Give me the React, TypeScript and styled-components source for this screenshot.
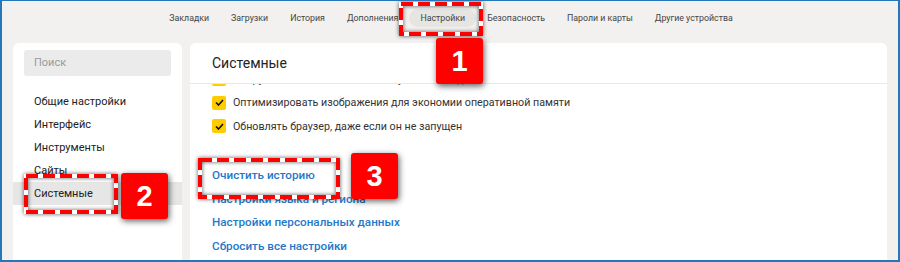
import React from "react";
import styled, { createGlobalStyle } from "styled-components";

const Global = createGlobalStyle`
  html, body { margin: 0; padding: 0; }
  body { font-family: Roboto, "Open Sans", sans-serif; }
  * { box-sizing: border-box; }
`;

const Page = styled.div`
  position: relative;
  width: 900px;
  height: 262px;
  overflow: hidden;
  background: #f2f1ef;
  border-top: 1px solid #2478ba;
  border-left: 2px solid #2478ba;
  border-right: 2px solid #2478ba;
  border-bottom: 2px solid #2478ba;
  display: flex;
  flex-direction: column;
`;

const Nav = styled.nav`
  height: 33px;
  display: flex;
  justify-content: center;
  align-items: center;
  padding-left: 2px;
`;

const NavItem = styled.div<{ $active?: boolean }>`
  font-size: 8.8px;
  color: #444;
  padding: 4px 11px;
  border-radius: 12px;
  white-space: nowrap;
  background: ${(p) => (p.$active ? "#e6e5e2" : "transparent")};
`;

const Body = styled.div`
  flex: 1;
  display: flex;
  gap: 8px;
  padding: 9px 11px 0 11px;
  min-height: 0;
`;

const Sidebar = styled.aside`
  width: 169px;
  background: #fff;
  border-radius: 6px 6px 0 0;
  padding-top: 7px;
  display: flex;
  flex-direction: column;
`;

const Search = styled.div`
  margin: 0 11px 0 11px;
  height: 26px;
  background: #ebebeb;
  border-radius: 3px;
  color: #9a9a9a;
  font-size: 11px;
  line-height: 26px;
  padding-left: 10px;
`;

const Menu = styled.ul`
  list-style: none;
  margin: 14px 0 0 0;
  padding: 0;
`;

const MenuItem = styled.li<{ $active?: boolean }>`
  height: 23px;
  line-height: 23px;
  padding-left: 21px;
  font-size: 11px;
  color: #222;
  background: ${(p) => (p.$active ? "#e6e6e6" : "transparent")};
`;

const Main = styled.section`
  flex: 1;
  background: #fff;
  border-radius: 6px 6px 0 0;
  display: flex;
  flex-direction: column;
  min-height: 0;
`;

const Header = styled.header`
  height: 41px;
  border-bottom: 1px solid #e9e9e9;
  padding-left: 22px;
  display: flex;
  align-items: center;
  font-size: 14px;
  color: #222;
  position: relative;
  z-index: 1;
  background: #fff;
  border-radius: 6px 6px 0 0;
`;

const Scroll = styled.div`
  flex: 1;
  overflow: hidden;
  padding-left: 22px;
`;

const ScrollInner = styled.div`
  margin-top: -16.5px;
`;

const CheckRow = styled.div`
  height: 23.5px;
  display: flex;
  align-items: center;
  gap: 7px;
  font-size: 10.7px;
  color: #333;
  white-space: nowrap;
`;

const Box = styled.span`
  width: 14px;
  height: 14px;
  border-radius: 2px;
  background: #ffcc00;
  display: flex;
  align-items: center;
  justify-content: center;
  flex: none;
`;

const Links = styled.div`
  margin-top: 26px;
`;

const LinkRow = styled.a`
  display: block;
  height: 23.5px;
  line-height: 23.5px;
  font-size: 11.7px;
  font-weight: 500;
  color: #1f78c9;
  text-decoration: none;
`;

const Mark = styled.div`
  position: absolute;
  z-index: 5;
  pointer-events: none;
  svg {
    display: block;
    overflow: visible;
    filter: drop-shadow(0 0 2px rgba(0, 0, 0, 0.65));
  }
`;

const Badge = styled.div`
  position: absolute;
  z-index: 6;
  width: 47px;
  height: 46px;
  background: #ff0000;
  border-radius: 3px;
  box-shadow: 1px 2px 6px rgba(0, 0, 0, 0.65);
  color: #fff;
  font-family: "Liberation Sans", Arial, sans-serif;
  font-weight: bold;
  font-size: 29px;
  display: flex;
  align-items: center;
  justify-content: center;
`;

function Dashed({ x, y, w, h }: { x: number; y: number; w: number; h: number }) {
  return (
    <Mark style={{ left: x, top: y, width: w, height: h }}>
      <svg width={w} height={h}>
        <rect x={2} y={2} width={w - 4} height={h - 4} fill="none" stroke="#fff" strokeWidth={4} />
        <rect
          x={2}
          y={2}
          width={w - 4}
          height={h - 4}
          fill="none"
          stroke="#ff0000"
          strokeWidth={4}
          strokeDasharray="12 5"
        />
      </svg>
    </Mark>
  );
}

const Check = () => (
  <svg width="9" height="7" viewBox="0 0 9 7">
    <polyline points="1,3.5 3.5,6 8,1" fill="none" stroke="#111" strokeWidth="1.6" />
  </svg>
);

const navItems = [
  "Закладки",
  "Загрузки",
  "История",
  "Дополнения",
  "Настройки",
  "Безопасность",
  "Пароли и карты",
  "Другие устройства",
];

const menu = ["Общие настройки", "Интерфейс", "Инструменты", "Сайты", "Системные"];

const checks = [
  "Выгружать из памяти неиспользуемые вкладки",
  "Оптимизировать изображения для экономии оперативной памяти",
  "Обновлять браузер, даже если он не запущен",
];

const links = [
  "Очистить историю",
  "Настройки языка и региона",
  "Настройки персональных данных",
  "Сбросить все настройки",
];

export default function App() {
  return (
    <>
      <Global />
      <Page>
        <Nav>
          {navItems.map((n) => (
            <NavItem key={n} $active={n === "Настройки"}>
              {n}
            </NavItem>
          ))}
        </Nav>
        <Body>
          <Sidebar>
            <Search>Поиск</Search>
            <Menu>
              {menu.map((m) => (
                <MenuItem key={m} $active={m === "Системные"}>
                  {m}
                </MenuItem>
              ))}
            </Menu>
          </Sidebar>
          <Main>
            <Header>Системные</Header>
            <Scroll>
              <ScrollInner>
                {checks.map((c) => (
                  <CheckRow key={c}>
                    <Box>
                      <Check />
                    </Box>
                    {c}
                  </CheckRow>
                ))}
                <Links>
                  {links.map((l) => (
                    <LinkRow key={l} href="#">
                      {l}
                    </LinkRow>
                  ))}
                </Links>
              </ScrollInner>
            </Scroll>
          </Main>
        </Body>
        <Dashed x={397} y={1} w={84} h={34} />
        <Badge style={{ left: 434, top: 37 }}>1</Badge>
        <Dashed x={22} y={173} w={94} h={40} />
        <Badge style={{ left: 119, top: 172 }}>2</Badge>
        <Dashed x={196} y={157} w={142} h={41} />
        <Badge style={{ left: 349, top: 152 }}>3</Badge>
      </Page>
    </>
  );
}
